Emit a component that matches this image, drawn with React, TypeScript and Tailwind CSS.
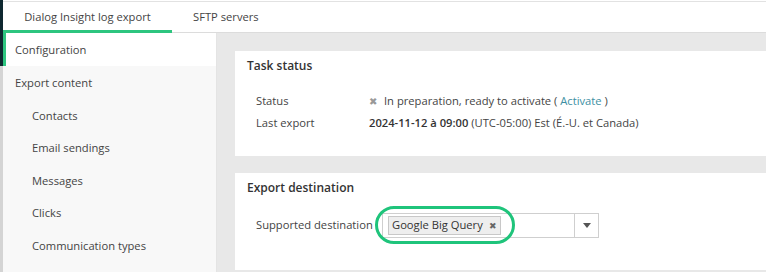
const font = { fontFamily: "'Open Sans', 'Liberation Sans', sans-serif" };

const navItems = [
  { label: "Configuration", active: true, sub: false },
  { label: "Export content", active: false, sub: false },
  { label: "Contacts", active: false, sub: true },
  { label: "Email sendings", active: false, sub: true },
  { label: "Messages", active: false, sub: true },
  { label: "Clicks", active: false, sub: true },
  { label: "Communication types", active: false, sub: true },
];

function Card({ title, children }: { title: string; children: React.ReactNode }) {
  return (
    <section className="w-full bg-white">
      <h2 className="m-0 px-3 pt-[6px] text-[12px] font-semibold leading-[18px] text-[#333]">{title}</h2>
      {children}
    </section>
  );
}

export default function App() {
  return (
    <div className="flex h-[272px] w-[766px] overflow-hidden bg-white text-[11.2px] text-[#444]" style={font}>
      <div className="flex w-[3px] shrink-0 flex-col">
        <div className="h-[66px] bg-[#0e2830]" />
        <div className="flex-1 bg-[#d4d4d4]" />
      </div>

      <div className="flex min-w-0 flex-1 flex-col">
        <div className="mt-[1px] flex h-[32px] border-t border-[#e2e2e2] bg-white">
          <div className="flex h-full w-[169px] items-center justify-center border-b-[3px] border-[#2dc57f] pt-[3px]">
            Dialog Insight log export
          </div>
          <div className="flex h-full flex-1 items-center border-b border-[#dcdcdc] pl-[21px]">SFTP servers</div>
        </div>

        <div className="flex flex-1">
          <nav className="w-[214px] shrink-0 border-r border-[#e4e4e4] bg-[#f8f8f8]">
            {navItems.map((item) => (
              <div
                key={item.label}
                className={
                  item.active
                    ? "flex h-[33px] items-center border-l-[3px] border-[#2dc57f] bg-white pl-[9px] pt-[2px]"
                    : item.sub
                      ? "flex h-[32.5px] items-center pl-[29px] pt-[3px]"
                      : "flex h-[32.5px] items-center pl-[12px] pt-[3px]"
                }
              >
                {item.label}
              </div>
            ))}
          </nav>

          <main className="flex flex-1 flex-col gap-[17px] bg-[#e8e8e8] pl-[18px] pt-[18px]">
            <Card title="Task status">
              <div className="grid grid-cols-[113px_1fr] gap-y-[4px] px-[21px] pb-[24px] pt-[17px] leading-[18px]">
                <span>Status</span>
                <span className="flex items-center">
                  <span className="mr-[7px] text-[10px] text-[#999]">✖</span>
                  In preparation, ready to activate (&nbsp;<span className="text-[#3d8fa3]">Activate</span>&nbsp;)
                </span>
                <span>Last export</span>
                <span>
                  <b className="font-semibold text-[#333]">2024-11-12 à 09:00</b> (UTC-05:00) Est (É.-U. et Canada)
                </span>
              </div>
            </Card>

            <Card title="Export destination">
              <div className="flex items-center px-[21px] pb-[32px] pt-[16px]">
                <span className="w-[126px]">Supported destination</span>
                <div className="relative flex h-[25px] w-[217px] items-center border border-[#cfcfcf] bg-white">
                  <div className="flex flex-1 items-center pl-[5px]">
                    <span className="flex h-[19px] items-center border border-[#c8c8c8] bg-[#eeeeee] px-[3px] text-[#333]">
                      Google Big Query
                      <span className="ml-[6px] text-[9px] text-[#666]">✖</span>
                    </span>
                  </div>
                  <div className="flex h-full w-[24px] items-center justify-center border-l border-[#cfcfcf]">
                    <svg width="8" height="5" viewBox="0 0 8 5">
                      <path d="M0 0h8L4 5z" fill="#555" />
                    </svg>
                  </div>
                  <div className="pointer-events-none absolute left-[-8px] top-[-8px] h-[38px] w-[140px] rounded-full border-[3px] border-[#1fc47b]" />
                </div>
              </div>
            </Card>
          </main>
        </div>
      </div>
    </div>
  );
}
